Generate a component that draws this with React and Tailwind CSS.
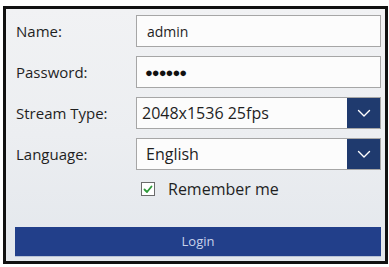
import React from "react";

const font = { fontFamily: '"Open Sans", "Noto Sans", sans-serif' };

function Chevron() {
  return (
    <svg width="14" height="9" viewBox="0 0 14 9" fill="none">
      <path d="M1.5 1.5 L7 7 L12.5 1.5" stroke="#ffffff" strokeWidth="1.4" strokeLinecap="round" strokeLinejoin="round" />
    </svg>
  );
}

function Label({ children }) {
  return <div className="text-[15px] text-[#1f1f1f] leading-none pl-[10px]">{children}</div>;
}

function Input({ children, className = "" }) {
  return (
    <div className={"h-[32px] border border-[#a6a6a6] bg-[#fcfcfc] flex items-center " + className}>
      {children}
    </div>
  );
}

function Select({ value, pad }) {
  return (
    <div className="h-[32px] border border-[#a6a6a6] bg-[#fcfcfc] flex items-stretch">
      <div className={"flex-1 flex items-center text-[16px] text-[#1f1f1f] " + pad}>{value}</div>
      <div className="w-[33px] bg-[#1f3a6e] flex items-center justify-center">
        <Chevron />
      </div>
    </div>
  );
}

export default function App() {
  return (
    <div className="w-[389px] h-[267px] bg-white pt-[6px] pl-[3px]" style={font}>
      <div className="w-[385px] h-[258px] border-[3px] border-[#111] bg-gradient-to-b from-[#f1f2f4] via-[#eceef1] to-[#e3e7ec] pr-[4px] pt-[6px]">
        <div className="grid grid-cols-[130px_1fr] gap-y-[9px] items-center">
          <Label>Name:</Label>
          <Input className="pl-[10px] text-[14px] text-[#1f1f1f]">admin</Input>
          <Label>Password:</Label>
          <Input className="pl-[8px]">
            <span className="text-[#111] text-[13px] tracking-[-1px] leading-none">●●●●●●</span>
          </Input>
          <Label>Stream Type:</Label>
          <Select value="2048x1536 25fps" pad="pl-[5px]" />
          <Label>Language:</Label>
          <Select value="English" pad="pl-[9px]" />
        </div>
        <div className="flex items-center pl-[135px] mt-[10px] h-[18px]">
          <div className="w-[14px] h-[14px] border border-[#6b6b6b] bg-white flex items-center justify-center">
            <svg width="10" height="9" viewBox="0 0 10 9" fill="none">
              <path d="M1.5 4.5 L4 7 L8.5 1.5" stroke="#2e9a3a" strokeWidth="1.8" strokeLinecap="round" strokeLinejoin="round" />
            </svg>
          </div>
          <span className="ml-[13px] text-[16px] text-[#1f1f1f] leading-none">Remember me</span>
        </div>
        <div className="pl-[9px]">
          <button className="mt-[29px] w-[366px] h-[30px] bg-[#223f8a] text-[#c9d3ea] text-[13px] flex items-center justify-center border-b border-[#b8c3d6]">
            Login
          </button>
        </div>
      </div>
    </div>
  );
}
